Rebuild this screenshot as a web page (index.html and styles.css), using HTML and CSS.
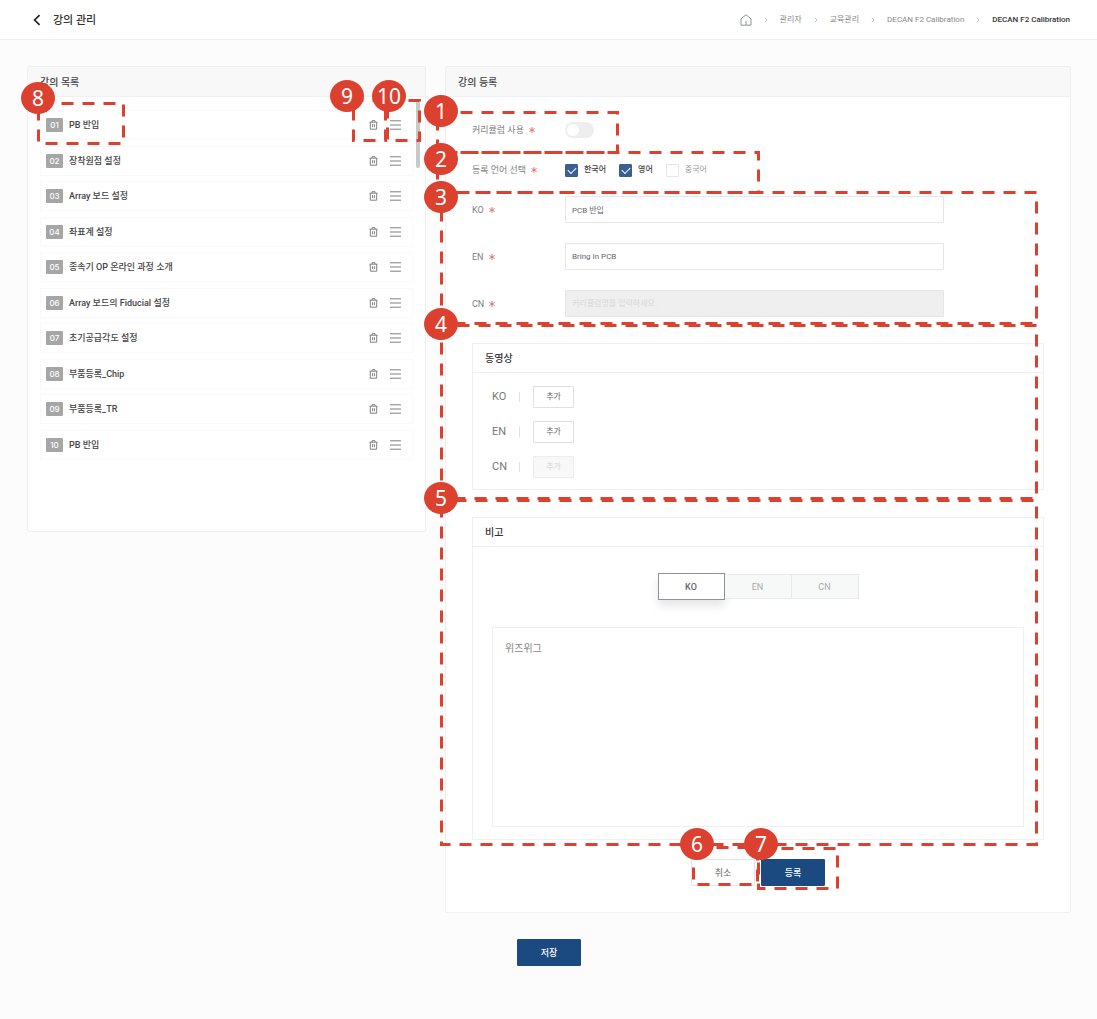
FILE: index.html
```html
<!DOCTYPE html>
<html lang="ko">
<head>
<meta charset="utf-8">
<meta name="viewport" content="width=device-width, initial-scale=1">
<title>강의 관리</title>
<link rel="stylesheet" href="styles.css">
</head>
<body>
<svg class="sprite" aria-hidden="true">
  <symbol id="trash" viewBox="0 0 9 10"><path d="M0.5 2.2h8M3 2V0.7h3V2M1.3 2.2v7h6.4v-7M3.6 4.2v3M5.4 4.2v3" fill="none" stroke="currentColor"/></symbol>
  <symbol id="bars" viewBox="0 0 11 10"><path d="M0 0.8h11M0 5h11M0 9.2h11" fill="none" stroke="currentColor"/></symbol>
  <symbol id="sep" viewBox="0 0 4 6"><path d="M0.8 0.8L3 3L0.8 5.2" fill="none" stroke="currentColor" stroke-width="0.8"/></symbol>
  <symbol id="star" viewBox="0 0 6 6"><path d="M3 0v6M0.4 1.5l5.2 3M0.4 4.5l5.2-3" fill="none" stroke="currentColor" stroke-width="0.9"/></symbol>
</svg>

<header class="topbar">
  <button class="back" type="button" aria-label="뒤로">
    <svg viewBox="0 0 8 12" width="8" height="12"><path d="M6.6 1.2L1.6 6l5 4.8" fill="none" stroke="currentColor" stroke-width="1.7"/></svg>
  </button>
  <h1 class="page-title">강의 관리</h1>
  <nav class="crumbs">
    <a href="#" aria-label="홈"><svg class="home" viewBox="0 0 12 12"><path d="M1 4.8L6 0.8l5 4v6.4H1zM6 11V6.8" fill="none" stroke="currentColor"/></svg></a>
    <svg class="sep"><use href="#sep"/></svg>
    <a href="#">관리자</a>
    <svg class="sep"><use href="#sep"/></svg>
    <a href="#">교육관리</a>
    <svg class="sep"><use href="#sep"/></svg>
    <a href="#">DECAN F2 Calibration</a>
    <svg class="sep"><use href="#sep"/></svg>
    <a class="current" href="#">DECAN F2 Calibration</a>
  </nav>
</header>

<main class="content">
  <div class="columns">
    <section class="panel">
      <h2 class="panel-head">강의 목록</h2>
      <div class="list-body">
        <ol class="lectures">
          <li class="lecture"><span class="num">01</span><span class="name">PB 반입</span><button class="icon" type="button" aria-label="삭제"><svg class="trash"><use href="#trash"/></svg></button><button class="icon" type="button" aria-label="순서 변경"><svg class="bars"><use href="#bars"/></svg></button>
            <span class="callout c8"><svg><rect/></svg><b>8</b></span>
            <span class="callout c9"><svg><rect/></svg><b>9</b></span>
            <span class="callout c10"><svg><rect/></svg><b>10</b></span>
          </li>
          <li class="lecture"><span class="num">02</span><span class="name">장착원점 설정</span><button class="icon" type="button" aria-label="삭제"><svg class="trash"><use href="#trash"/></svg></button><button class="icon" type="button" aria-label="순서 변경"><svg class="bars"><use href="#bars"/></svg></button></li>
          <li class="lecture"><span class="num">03</span><span class="name">Array 보드 설정</span><button class="icon" type="button" aria-label="삭제"><svg class="trash"><use href="#trash"/></svg></button><button class="icon" type="button" aria-label="순서 변경"><svg class="bars"><use href="#bars"/></svg></button></li>
          <li class="lecture"><span class="num">04</span><span class="name">좌표계 설정</span><button class="icon" type="button" aria-label="삭제"><svg class="trash"><use href="#trash"/></svg></button><button class="icon" type="button" aria-label="순서 변경"><svg class="bars"><use href="#bars"/></svg></button></li>
          <li class="lecture"><span class="num">05</span><span class="name">종속기 OP 온라인 과정 소개</span><button class="icon" type="button" aria-label="삭제"><svg class="trash"><use href="#trash"/></svg></button><button class="icon" type="button" aria-label="순서 변경"><svg class="bars"><use href="#bars"/></svg></button></li>
          <li class="lecture"><span class="num">06</span><span class="name">Array 보드의 Fiducial 설정</span><button class="icon" type="button" aria-label="삭제"><svg class="trash"><use href="#trash"/></svg></button><button class="icon" type="button" aria-label="순서 변경"><svg class="bars"><use href="#bars"/></svg></button></li>
          <li class="lecture"><span class="num">07</span><span class="name">초기공급각도 설정</span><button class="icon" type="button" aria-label="삭제"><svg class="trash"><use href="#trash"/></svg></button><button class="icon" type="button" aria-label="순서 변경"><svg class="bars"><use href="#bars"/></svg></button></li>
          <li class="lecture"><span class="num">08</span><span class="name">부품등록_Chip</span><button class="icon" type="button" aria-label="삭제"><svg class="trash"><use href="#trash"/></svg></button><button class="icon" type="button" aria-label="순서 변경"><svg class="bars"><use href="#bars"/></svg></button></li>
          <li class="lecture"><span class="num">09</span><span class="name">부품등록_TR</span><button class="icon" type="button" aria-label="삭제"><svg class="trash"><use href="#trash"/></svg></button><button class="icon" type="button" aria-label="순서 변경"><svg class="bars"><use href="#bars"/></svg></button></li>
          <li class="lecture"><span class="num">10</span><span class="name">PB 반입</span><button class="icon" type="button" aria-label="삭제"><svg class="trash"><use href="#trash"/></svg></button><button class="icon" type="button" aria-label="순서 변경"><svg class="bars"><use href="#bars"/></svg></button></li>
        </ol>
        <div class="scroll-thumb"></div>
      </div>
    </section>

    <section class="panel">
      <h2 class="panel-head">강의 등록</h2>
      <form class="form">
        <div class="row">
          <label class="label" for="use">커리큘럼 사용<svg class="star"><use href="#star"/></svg></label>
          <input class="toggle" id="use" type="checkbox" role="switch">
          <span class="callout c1"><svg><rect/></svg><b>1</b></span>
        </div>
        <div class="row">
          <span class="label">등록 언어 선택<svg class="star"><use href="#star"/></svg></span>
          <div class="langs">
            <label class="check on"><input type="checkbox" checked>한국어</label>
            <label class="check on"><input type="checkbox" checked>영어</label>
            <label class="check"><input type="checkbox">중국어</label>
          </div>
          <span class="callout c2"><svg><rect/></svg><b>2</b></span>
        </div>
        <div class="fields">
          <div class="field"><label class="label" for="ko">KO<svg class="star"><use href="#star"/></svg></label><input class="text" id="ko" type="text" value="PCB 반입"></div>
          <div class="field"><label class="label" for="en">EN<svg class="star"><use href="#star"/></svg></label><input class="text" id="en" type="text" value="Bring In PCB"></div>
          <div class="field"><label class="label" for="cn">CN<svg class="star"><use href="#star"/></svg></label><input class="text" id="cn" type="text" placeholder="커리큘럼명을 입력하세요." disabled></div>
          <span class="callout c3"><svg><rect/></svg><b>3</b></span>
        </div>

        <section class="box">
          <h3 class="box-head">동영상</h3>
          <div class="videos">
            <div class="video"><span class="lang">KO</span><button class="add" type="button">추가</button></div>
            <div class="video"><span class="lang">EN</span><button class="add" type="button">추가</button></div>
            <div class="video"><span class="lang">CN</span><button class="add" type="button" disabled>추가</button></div>
          </div>
          <span class="callout c4"><svg><rect/></svg><b>4</b></span>
        </section>

        <section class="box">
          <h3 class="box-head">비고</h3>
          <div class="note">
            <div class="tabs" role="tablist">
              <button class="tab active" type="button" role="tab" aria-selected="true">KO</button>
              <button class="tab" type="button" role="tab" aria-selected="false">EN</button>
              <button class="tab" type="button" role="tab" aria-selected="false">CN</button>
            </div>
            <textarea class="editor" aria-label="비고">위즈위그</textarea>
          </div>
          <span class="callout c5"><svg><rect/></svg><b>5</b></span>
        </section>

        <div class="actions">
          <div class="action"><button class="btn" type="button">취소</button><span class="callout c6"><svg><rect/></svg><b>6</b></span></div>
          <div class="action"><button class="btn primary" type="button">등록</button><span class="callout c7"><svg><rect/></svg><b>7</b></span></div>
        </div>
      </form>
    </section>
  </div>
  <div class="save"><button class="btn primary" type="button">저장</button></div>
</main>
</body>
</html>
```

FILE: styles.css
```css
* { box-sizing: border-box; }

body {
  margin: 0;
  background: #fcfcfc;
  color: #444;
  font: 9px/14px Roboto, "Noto Sans CJK KR", sans-serif;
}

h1, h2, h3, ol { margin: 0; padding: 0; font-weight: 500; }
button, input, textarea { font: inherit; color: inherit; margin: 0; }
button { padding: 0; }
svg { display: block; }
a { color: inherit; text-decoration: none; }
.sprite { position: absolute; width: 0; height: 0; }

/* Top bar */
.topbar {
  display: flex;
  align-items: center;
  height: 40px;
  padding: 0 27px 0 33px;
  background: #fff;
  border-bottom: 1px solid #f0f0f0;
}
.back { border: 0; background: none; color: #222; }
.page-title { margin-left: 12px; padding-top: 2px; font-size: 11px; color: #333; }
.crumbs {
  display: flex;
  align-items: center;
  gap: 12px;
  margin-left: auto;
  color: #888;
  font-size: 8px;
}
.home { width: 12px; height: 12px; color: #8d939a; }
.sep { width: 4px; height: 6px; color: #bbb; }
.current { color: #333; font-weight: 500; }

/* Panels */
.content { padding: 26px 26px 53px 27px; }
.columns {
  display: grid;
  grid-template-columns: minmax(0, 399fr) minmax(0, 626fr);
  gap: 19px;
  align-items: start;
}
.panel { background: #fff; border: 1px solid #f0f0f3; border-radius: 2px; }
.panel-head {
  padding: 9px 12px 6px;
  background: #f8f8f8;
  border-bottom: 1px solid #edf0f4;
  font-size: 10px;
}

/* Lecture list */
.list-body { position: relative; padding: 13px 12px 71px; }
.lectures {
  display: flex;
  flex-direction: column;
  justify-content: space-between;
  min-height: 350px;
  list-style: none;
}
.lecture {
  position: relative;
  display: flex;
  align-items: center;
  height: 30px;
  padding: 0 11px 0 5px;
  border: 1px solid #f9f9f9;
}
.num {
  width: 17px;
  margin-right: 6px;
  border-radius: 1px;
  background: #a6a6a6;
  color: #fff;
  font-family: Inter, sans-serif;
  font-size: 8px;
  font-weight: 500;
  text-align: center;
}
.name { flex: 1; }
.icon { margin-left: 12px; border: 0; background: none; color: #808080; }
.trash { width: 9px; height: 10px; }
.bars { width: 11px; height: 10px; }
.scroll-thumb {
  position: absolute;
  top: 4px;
  right: 5px;
  width: 4px;
  height: 67px;
  border-radius: 2px;
  background: #c8c8c8;
}

/* Form */
.form { padding: 13px 26px 26px; }
.row { position: relative; display: flex; align-items: center; height: 40px; }
.label { display: flex; align-items: center; gap: 5px; width: 93px; color: #808080; }
.star { width: 6px; height: 6px; color: #e06a62; }
.toggle {
  appearance: none;
  width: 29px;
  height: 16px;
  padding: 2px;
  border-radius: 8px;
  background: #eee;
}
.toggle::before {
  content: "";
  display: block;
  width: 12px;
  height: 12px;
  border-radius: 50%;
  background: #fff;
}
.toggle:checked::before { margin-left: auto; }

.langs { display: flex; gap: 13px; font-size: 8px; }
.check { display: flex; align-items: center; gap: 6px; color: #999; }
.check.on { color: #444; font-weight: 500; }
.check input {
  appearance: none;
  display: grid;
  place-items: center;
  width: 13px;
  height: 13px;
  border: 1px solid #e6e6e6;
  border-radius: 1px;
  background: #fff;
}
.check input:checked { border-color: #3c5f91; background: #3c5f91; }
.check input:checked::before {
  content: "";
  width: 7px;
  height: 4px;
  margin-top: -2px;
  border: solid #fff;
  border-width: 0 0 1px 1px;
  transform: rotate(-45deg);
}

.fields { position: relative; display: grid; gap: 20px; margin-top: 6px; }
.field { display: flex; align-items: center; }
.text {
  flex: 0 1 379px;
  min-width: 0;
  height: 27px;
  padding: 0 6px;
  border: 1px solid #e6e6e6;
  border-radius: 1px;
  background: #fff;
  color: #666;
  font-size: 8px;
}
.text:disabled { background: #efefef; }
.text::placeholder { color: #d9d9d9; }

/* Boxed groups */
.box {
  position: relative;
  margin-top: 26px;
  border: 1px solid #edf0f4;
}
.box + .box { margin-top: 27px; }
.box-head { padding: 8px 12px 6px; border-bottom: 1px solid #edf0f4; font-size: 10px; color: #333; }
.videos { display: grid; gap: 13px; padding: 13px 19px 11px; }
.video { display: flex; align-items: center; }
.lang {
  display: flex;
  align-items: center;
  justify-content: space-between;
  width: 28px;
  margin-right: 13px;
  color: #777;
  font-size: 11px;
}
.lang::after { content: ""; width: 1px; height: 10px; background: #e0e0e0; }
.add {
  width: 41px;
  height: 22px;
  border: 1px solid #e0e0e0;
  border-radius: 1px;
  background: #fff;
  color: #666;
  font-size: 8px;
}
.add:disabled { border-color: #ededed; background: #f8f8f8; color: #d5d5d5; }

.note { display: grid; gap: 27px; padding: 26px 19px 12px; }
.tabs { display: flex; align-items: center; justify-content: center; }
.tab {
  width: 67px;
  height: 25px;
  border: 1px solid #e8eaea;
  border-left-width: 0;
  background: #f7f9f8;
  color: #aaa;
}
.tab.active {
  height: 27px;
  border: 1px solid #8d9299;
  background: #fff;
  color: #666;
  font-weight: 500;
  box-shadow: 0 6px 10px rgba(0, 0, 0, 0.1);
}
.editor {
  display: block;
  width: 100%;
  height: 200px;
  padding: 14px 12px;
  border: 1px solid #edf0f4;
  background: #fff;
  color: #888;
  font-size: 10px;
  resize: none;
}

.actions { display: flex; justify-content: center; gap: 6px; margin-top: 19px; }
.action { position: relative; }
.btn {
  display: block;
  width: 64px;
  height: 27px;
  border: 1px solid #e6e6e6;
  border-radius: 1px;
  background: #fff;
  color: #666;
}
.btn.primary { border-color: #1b4a80; background: #1b4a80; color: #fff; font-weight: 500; }
.save { display: flex; justify-content: center; margin-top: 26px; }

/* Numbered callouts drawn over the screen */
.callout { position: absolute; pointer-events: none; }
.callout svg { position: absolute; z-index: 1; width: 100%; height: 100%; overflow: visible; }
.callout rect {
  x: 1.5px;
  y: 1.5px;
  width: calc(100% - 3px);
  height: calc(100% - 3px);
  fill: none;
  stroke: #dc402f;
  stroke-width: 3px;
  stroke-dasharray: 12 9;
  stroke-dashoffset: -2px;
}
.callout b {
  position: absolute;
  z-index: 2;
  width: 34px;
  height: 32px;
  border-radius: 50%;
  background: #dc402f;
  color: #fff;
  font: 400 21px/32px "Noto Sans", sans-serif;
  text-align: center;
}
.c1 { left: -36px; top: 1px; width: 183px; height: 43px; }
.c1 b { left: -12px; top: -16px; }
.c2 { left: -36px; top: 1px; width: 324px; height: 43px; }
.c2 b { left: -12px; top: -8px; }
.c3 { left: -32px; right: 6px; top: -5px; bottom: -8px; }
.c3 b { left: -16px; top: -10px; }
.c4 { left: -33px; right: 5px; top: -20px; bottom: -11px; }
.c4 b { left: -16px; top: -16px; }
.c5 { left: -33px; right: 5px; top: -19px; bottom: -7px; }
.c5 b { left: -16px; top: -17px; }
.c6 { left: 1px; top: -13px; width: 67px; height: 40px; }
.c6 b { left: -12px; top: -18px; }
.c7 { left: -4px; top: -12px; width: 82px; height: 43px; }
.c7 b { left: -13px; top: -19px; }
.c8 { left: -4px; top: -9px; width: 88px; height: 43px; }
.c8 b { left: -16px; top: -20px; }
.c9 { right: 25px; top: -12px; width: 35px; height: 43px; }
.c9 b { left: -22px; top: -19px; }
.c10 { right: -9px; top: -12px; width: 35px; height: 43px; }
.c10 b { left: -14px; top: -19px; }
.c3 rect, .c4 rect { stroke-dashoffset: -16px; }
.c5 rect { stroke-dashoffset: -13px; }
.c9 rect { stroke-dashoffset: -19px; }
.c10 rect { stroke-dashoffset: 0px; }
```
